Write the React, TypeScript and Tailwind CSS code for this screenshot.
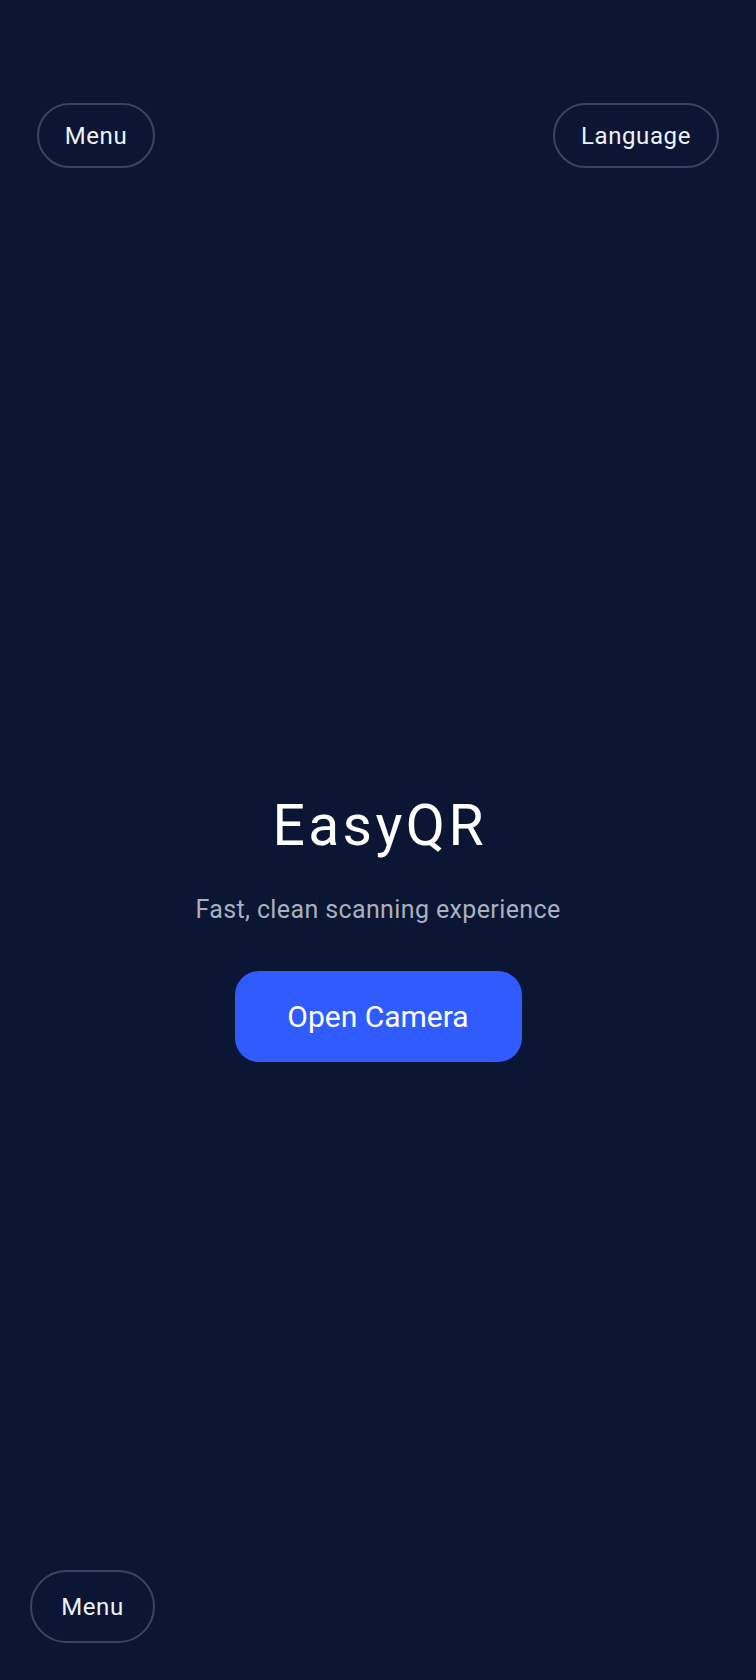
export default function App() {
  return (
    <div
      className="min-h-[1680px] w-full flex flex-col bg-[#0b1634] text-white"
      style={{ fontFamily: "Roboto, 'Noto Sans', sans-serif" }}
    >
      {/* top bar */}
      <div className="flex items-center justify-between px-[37px] pt-[103px]">
        <button className="h-[65px] w-[118px] rounded-full border-2 border-white/20 text-[24px] tracking-wide text-[#eef1f7]">
          Menu
        </button>
        <button className="h-[65px] w-[166px] rounded-full border-2 border-white/20 text-[24px] tracking-wide text-[#eef1f7]">
          Language
        </button>
      </div>

      {/* hero */}
      <div className="mt-[629px] flex flex-col items-center">
        <h1 className="text-[57px] leading-none font-normal tracking-[0.06em] pl-[0.06em]">EasyQR</h1>
        <p className="mt-[43px] text-[25px] leading-none tracking-[0.015em] text-[#a9b0be]">
          Fast, clean scanning experience
        </p>
        <button className="mt-[49px] h-[91px] w-[287px] rounded-3xl bg-[#2f5bff] text-[30px] text-white">
          Open Camera
        </button>
      </div>

      {/* bottom bar */}
      <div className="mt-auto px-[30px] pb-[37px]">
        <button className="h-[73px] w-[125px] rounded-full border-2 border-white/20 text-[24px] tracking-wide text-[#eef1f7]">
          Menu
        </button>
      </div>
    </div>
  );
}
